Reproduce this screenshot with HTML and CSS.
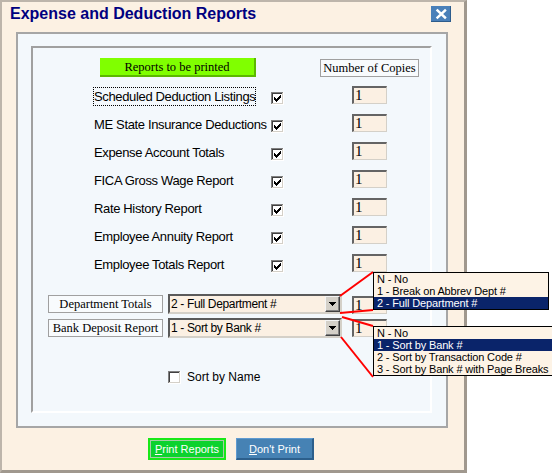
FILE: index.html
```html
<!DOCTYPE html>
<html>
<head>
<meta charset="utf-8">
<title>Expense and Deduction Reports</title>
<link rel="stylesheet" href="styles.css">
</head>
<body>
<div class="stage">
  <div class="window">
    <div class="titlebar">
      <span class="title">Expense and Deduction Reports</span>
      <svg class="close" width="20" height="16" viewBox="0 0 20 16">
        <rect width="20" height="16" fill="#4a80b9"/>
        <rect x="0" y="15" width="20" height="1" fill="#2d5c8c"/>
        <rect x="19" y="0" width="1" height="16" fill="#2d5c8c"/>
        <path d="M6.5 4.5 L14 11.5 M14 4.5 L6.5 11.5" stroke="#fff" stroke-width="2.4" stroke-linecap="square"/>
      </svg>
    </div>
    <div class="panel">
      <div class="group">
        <div class="head">
          <div class="green-btn">Reports to be printed</div>
          <div class="copies-head">Number of Copies</div>
        </div>
        <div class="reports">
          <div class="row">
            <div class="lbl"><span class="focus">Scheduled Deduction Listings</span></div>
            <svg class="chk" width="13" height="13" viewBox="0 0 13 13" shape-rendering="crispEdges"><rect width="13" height="13" fill="#fff"/><path d="M0 0h12v1H1v11H0z" fill="#808080"/><path d="M1 1h10v1H2v9H1z" fill="#404040"/><path d="M11 1h1v11H1v-1h10z" fill="#d4d0c8"/><path d="M9 3h1v1H9zM8 4h2v1H8zM3 5h1v1H3zM7 5h3v1H7zM3 6h2v1H3zM6 6h3v1H6zM3 7h5v1H3zM4 8h3v1H4zM5 9h1v1H5z" fill="#000"/></svg>
            <div class="num">1</div>
          </div>
          <div class="row">
            <div class="lbl"><span>ME State Insurance Deductions</span></div>
            <svg class="chk" width="13" height="13" viewBox="0 0 13 13" shape-rendering="crispEdges"><rect width="13" height="13" fill="#fff"/><path d="M0 0h12v1H1v11H0z" fill="#808080"/><path d="M1 1h10v1H2v9H1z" fill="#404040"/><path d="M11 1h1v11H1v-1h10z" fill="#d4d0c8"/><path d="M9 3h1v1H9zM8 4h2v1H8zM3 5h1v1H3zM7 5h3v1H7zM3 6h2v1H3zM6 6h3v1H6zM3 7h5v1H3zM4 8h3v1H4zM5 9h1v1H5z" fill="#000"/></svg>
            <div class="num">1</div>
          </div>
          <div class="row">
            <div class="lbl"><span>Expense Account Totals</span></div>
            <svg class="chk" width="13" height="13" viewBox="0 0 13 13" shape-rendering="crispEdges"><rect width="13" height="13" fill="#fff"/><path d="M0 0h12v1H1v11H0z" fill="#808080"/><path d="M1 1h10v1H2v9H1z" fill="#404040"/><path d="M11 1h1v11H1v-1h10z" fill="#d4d0c8"/><path d="M9 3h1v1H9zM8 4h2v1H8zM3 5h1v1H3zM7 5h3v1H7zM3 6h2v1H3zM6 6h3v1H6zM3 7h5v1H3zM4 8h3v1H4zM5 9h1v1H5z" fill="#000"/></svg>
            <div class="num">1</div>
          </div>
          <div class="row">
            <div class="lbl"><span>FICA Gross Wage Report</span></div>
            <svg class="chk" width="13" height="13" viewBox="0 0 13 13" shape-rendering="crispEdges"><rect width="13" height="13" fill="#fff"/><path d="M0 0h12v1H1v11H0z" fill="#808080"/><path d="M1 1h10v1H2v9H1z" fill="#404040"/><path d="M11 1h1v11H1v-1h10z" fill="#d4d0c8"/><path d="M9 3h1v1H9zM8 4h2v1H8zM3 5h1v1H3zM7 5h3v1H7zM3 6h2v1H3zM6 6h3v1H6zM3 7h5v1H3zM4 8h3v1H4zM5 9h1v1H5z" fill="#000"/></svg>
            <div class="num">1</div>
          </div>
          <div class="row">
            <div class="lbl"><span>Rate History Report</span></div>
            <svg class="chk" width="13" height="13" viewBox="0 0 13 13" shape-rendering="crispEdges"><rect width="13" height="13" fill="#fff"/><path d="M0 0h12v1H1v11H0z" fill="#808080"/><path d="M1 1h10v1H2v9H1z" fill="#404040"/><path d="M11 1h1v11H1v-1h10z" fill="#d4d0c8"/><path d="M9 3h1v1H9zM8 4h2v1H8zM3 5h1v1H3zM7 5h3v1H7zM3 6h2v1H3zM6 6h3v1H6zM3 7h5v1H3zM4 8h3v1H4zM5 9h1v1H5z" fill="#000"/></svg>
            <div class="num">1</div>
          </div>
          <div class="row">
            <div class="lbl"><span>Employee Annuity Report</span></div>
            <svg class="chk" width="13" height="13" viewBox="0 0 13 13" shape-rendering="crispEdges"><rect width="13" height="13" fill="#fff"/><path d="M0 0h12v1H1v11H0z" fill="#808080"/><path d="M1 1h10v1H2v9H1z" fill="#404040"/><path d="M11 1h1v11H1v-1h10z" fill="#d4d0c8"/><path d="M9 3h1v1H9zM8 4h2v1H8zM3 5h1v1H3zM7 5h3v1H7zM3 6h2v1H3zM6 6h3v1H6zM3 7h5v1H3zM4 8h3v1H4zM5 9h1v1H5z" fill="#000"/></svg>
            <div class="num">1</div>
          </div>
          <div class="row">
            <div class="lbl"><span>Employee Totals Report</span></div>
            <svg class="chk" width="13" height="13" viewBox="0 0 13 13" shape-rendering="crispEdges"><rect width="13" height="13" fill="#fff"/><path d="M0 0h12v1H1v11H0z" fill="#808080"/><path d="M1 1h10v1H2v9H1z" fill="#404040"/><path d="M11 1h1v11H1v-1h10z" fill="#d4d0c8"/><path d="M9 3h1v1H9zM8 4h2v1H8zM3 5h1v1H3zM7 5h3v1H7zM3 6h2v1H3zM6 6h3v1H6zM3 7h5v1H3zM4 8h3v1H4zM5 9h1v1H5z" fill="#000"/></svg>
            <div class="num">1</div>
          </div>
        </div>
        <div class="combo-row combo-dept">
          <div class="lbl-box">Department Totals</div>
          <div class="select">
            <span class="val">2 - Full Department #</span>
            <span class="ddbtn"><svg width="7" height="4" viewBox="0 0 7 4" shape-rendering="crispEdges"><path d="M0 0h7v1H0zM1 1h5v1H1zM2 2h3v1H2zM3 3h1v1H3z" fill="#000"/></svg></span>
          </div>
          <div class="num num-dept">1</div>
        </div>
        <div class="combo-row combo-bank">
          <div class="lbl-box">Bank Deposit Report</div>
          <div class="select">
            <span class="val">1 - Sort by Bank #</span>
            <span class="ddbtn"><svg width="7" height="4" viewBox="0 0 7 4" shape-rendering="crispEdges"><path d="M0 0h7v1H0zM1 1h5v1H1zM2 2h3v1H2zM3 3h1v1H3z" fill="#000"/></svg></span>
          </div>
          <div class="num num-bank">1</div>
        </div>
        <div class="sort-row">
          <svg class="chk-plain" width="13" height="13" viewBox="0 0 13 13" shape-rendering="crispEdges"><rect width="13" height="13" fill="#fff"/><path d="M0 0h12v1H1v11H0z" fill="#808080"/><path d="M1 1h10v1H2v9H1z" fill="#404040"/><path d="M11 1h1v11H1v-1h10z" fill="#d4d0c8"/></svg>
          <span>Sort by Name</span>
        </div>
      </div>
    </div>
    <div class="actions">
      <button class="btn print"><u>P</u>rint Reports</button>
      <button class="btn dont"><u>D</u>on't Print</button>
    </div>
  </div>

  <svg class="callouts" width="552" height="474" viewBox="0 0 552 474">
    <path d="M340 296 L373 272" stroke="#f00" stroke-width="2" fill="none"/>
    <path d="M340 313 L373 310" stroke="#f00" stroke-width="2" fill="none"/>
    <path d="M342 317 L373 326" stroke="#f00" stroke-width="2" fill="none"/>
    <path d="M341 337 L373 377" stroke="#f00" stroke-width="2" fill="none"/>
  </svg>

  <div class="dd dd1">
    <div>N - No</div>
    <div>1 - Break on Abbrev Dept #</div>
    <div class="sel">2 - Full Department #</div>
  </div>
  <div class="dd dd2">
    <div>N - No</div>
    <div class="sel">1 - Sort by Bank #</div>
    <div>2 - Sort by Transaction Code #</div>
    <div>3 - Sort by Bank # with Page Breaks</div>
  </div>
</div>
</body>
</html>
```

FILE: styles.css
```css
body {
  margin: 0;
  background: #ffffff;
  font-family: "Liberation Sans", Arial, sans-serif;
  color: #000;
}

.stage {
  position: relative;
  width: 552px;
  height: 474px;
  overflow: hidden;
}

.window {
  width: 467px;
  height: 473px;
  box-sizing: border-box;
  background: #fcf1e3;
  border-style: solid;
  border-width: 2px 3px 3px 2px;
  border-color: #bdb5ab #a0988e #a0988e #bdb5ab;
  display: flex;
  flex-direction: column;
}

.titlebar {
  height: 30px;
  box-sizing: border-box;
  padding: 2px 13px 0 8px;
  display: flex;
  justify-content: space-between;
  align-items: flex-start;
}

.title {
  font: bold 16px/20px "Liberation Sans", Arial, sans-serif;
  color: #000080;
  white-space: nowrap;
}

.close {
  display: block;
  margin-top: 2px;
}

.panel {
  margin-left: 14px;
  width: 432px;
  height: 396px;
  box-sizing: border-box;
  border: 2px solid #a6a6a6;
  background: #f3f8fc;
  padding: 12px 0 0 13px;
}

.group {
  width: 401px;
  height: 367px;
  box-sizing: border-box;
  border-style: solid;
  border-width: 2px;
  border-color: #a0a0a0 #ffffff #ffffff #a0a0a0;
}

.head {
  display: flex;
  align-items: flex-start;
  margin-top: 10px;
  padding-left: 67px;
}

.green-btn {
  width: 156px;
  height: 19px;
  box-sizing: border-box;
  background: #80ff00;
  border-right: 2px solid #5cb800;
  border-bottom: 2px solid #5cb800;
  padding-top: 2px;
  font: 12.5px/15px "Liberation Serif", "Times New Roman", serif;
  text-align: center;
  white-space: nowrap;
}

.copies-head {
  margin-left: 64px;
  margin-top: 1px;
  width: 99px;
  height: 18px;
  box-sizing: border-box;
  border: 1px solid #a0a0a0;
  background: #f8fbfd;
  font: 12.5px/16px "Liberation Serif", "Times New Roman", serif;
  text-align: center;
  white-space: nowrap;
}

.reports {
  margin-top: 9px;
  padding-left: 60px;
  display: flex;
  flex-direction: column;
  gap: 10px;
}

.row {
  display: flex;
  align-items: flex-start;
  height: 18px;
}

.lbl {
  width: 178px;
  height: 19px;
  margin-top: 1px;
  font-size: 13px;
  line-height: 17px;
  letter-spacing: -0.35px;
  white-space: nowrap;
  flex: none;
}

.lbl span {
  display: inline-block;
  height: 17px;
  border: 1px solid transparent;
}

.lbl span.focus {
  border: 1px dotted #000;
}

.chk {
  display: block;
  margin-top: 6px;
  flex: none;
}

.num {
  margin-left: 68px;
  width: 35px;
  height: 18px;
  box-sizing: border-box;
  border-style: solid;
  border-width: 2px 1px 1px 2px;
  border-color: #646464 #d4d0c8 #d4d0c8 #646464;
  background: #fbf0e3;
  padding-left: 1px;
  font: 15px/14px "Liberation Serif", "Times New Roman", serif;
  flex: none;
}

.combo-row {
  display: flex;
  align-items: flex-start;
  padding-left: 15px;
  height: 20px;
}

.combo-dept {
  margin-top: 22px;
}

.combo-bank {
  margin-top: 4px;
}

.lbl-box {
  width: 115px;
  height: 18px;
  margin-top: 1px;
  box-sizing: border-box;
  border: 1px solid #a0a0a0;
  background: #f8fbfd;
  font: 12.5px/16px "Liberation Serif", "Times New Roman", serif;
  text-align: center;
  white-space: nowrap;
}

.select {
  margin-left: 5px;
  width: 174px;
  height: 20px;
  box-sizing: border-box;
  border-style: solid;
  border-width: 2px;
  border-color: #5a5a5a #d4d0c8 #d4d0c8 #5a5a5a;
  background: #fbf0e3;
  display: flex;
}

.select .val {
  flex: 1;
  padding-left: 1px;
  font-size: 12px;
  line-height: 16px;
  letter-spacing: -0.35px;
  white-space: nowrap;
}

.ddbtn {
  width: 15px;
  height: 16px;
  box-sizing: border-box;
  background: #d4d0c8;
  border-style: solid;
  border-width: 1px;
  border-color: #f4f4f4 #404040 #404040 #f4f4f4;
  box-shadow: inset -1px -1px 0 #808080;
  display: flex;
  align-items: center;
  justify-content: center;
}

.ddbtn svg {
  display: block;
}

.num-dept {
  margin-left: 10px;
  margin-top: 2px;
}

.num-bank {
  margin-left: 10px;
  margin-top: 1px;
}

.sort-row {
  margin-top: 32px;
  padding-left: 135px;
  display: flex;
  align-items: center;
  gap: 6px;
  font-size: 12px;
  line-height: 15px;
}

.chk-plain {
  display: block;
}

.actions {
  display: flex;
  justify-content: center;
  gap: 10px;
  padding-right: 4px;
  margin-top: 10px;
}

.btn {
  width: 78px;
  height: 22px;
  box-sizing: border-box;
  padding: 0;
  margin: 0;
  font: 11px/16px "Liberation Sans", Arial, sans-serif;
  color: #fff;
  white-space: nowrap;
}

.print {
  background: #0cd22e;
  border: 2px solid #18e818;
  box-shadow: inset 0 0 0 1px #a8caa8;
}

.dont {
  background: #4682b4;
  border-style: solid;
  border-width: 1px 2px 2px 1px;
  border-color: #5f9ad0 #2c5f8c #2c5f8c #5f9ad0;
}

.callouts {
  position: absolute;
  left: 0;
  top: 0;
  pointer-events: none;
}

.dd {
  position: absolute;
  left: 373px;
  border: 1px solid #000;
  background: #fdf3e6;
  font: 11px/12px "Liberation Sans", Arial, sans-serif;
  letter-spacing: -0.15px;
}

.dd div {
  height: 12px;
  padding-left: 3px;
  white-space: nowrap;
}

.dd .sel {
  background: #0a246a;
  color: #fff;
}

.dd1 {
  top: 272px;
  width: 174px;
}

.dd2 {
  top: 326px;
  width: 190px;
}
```
